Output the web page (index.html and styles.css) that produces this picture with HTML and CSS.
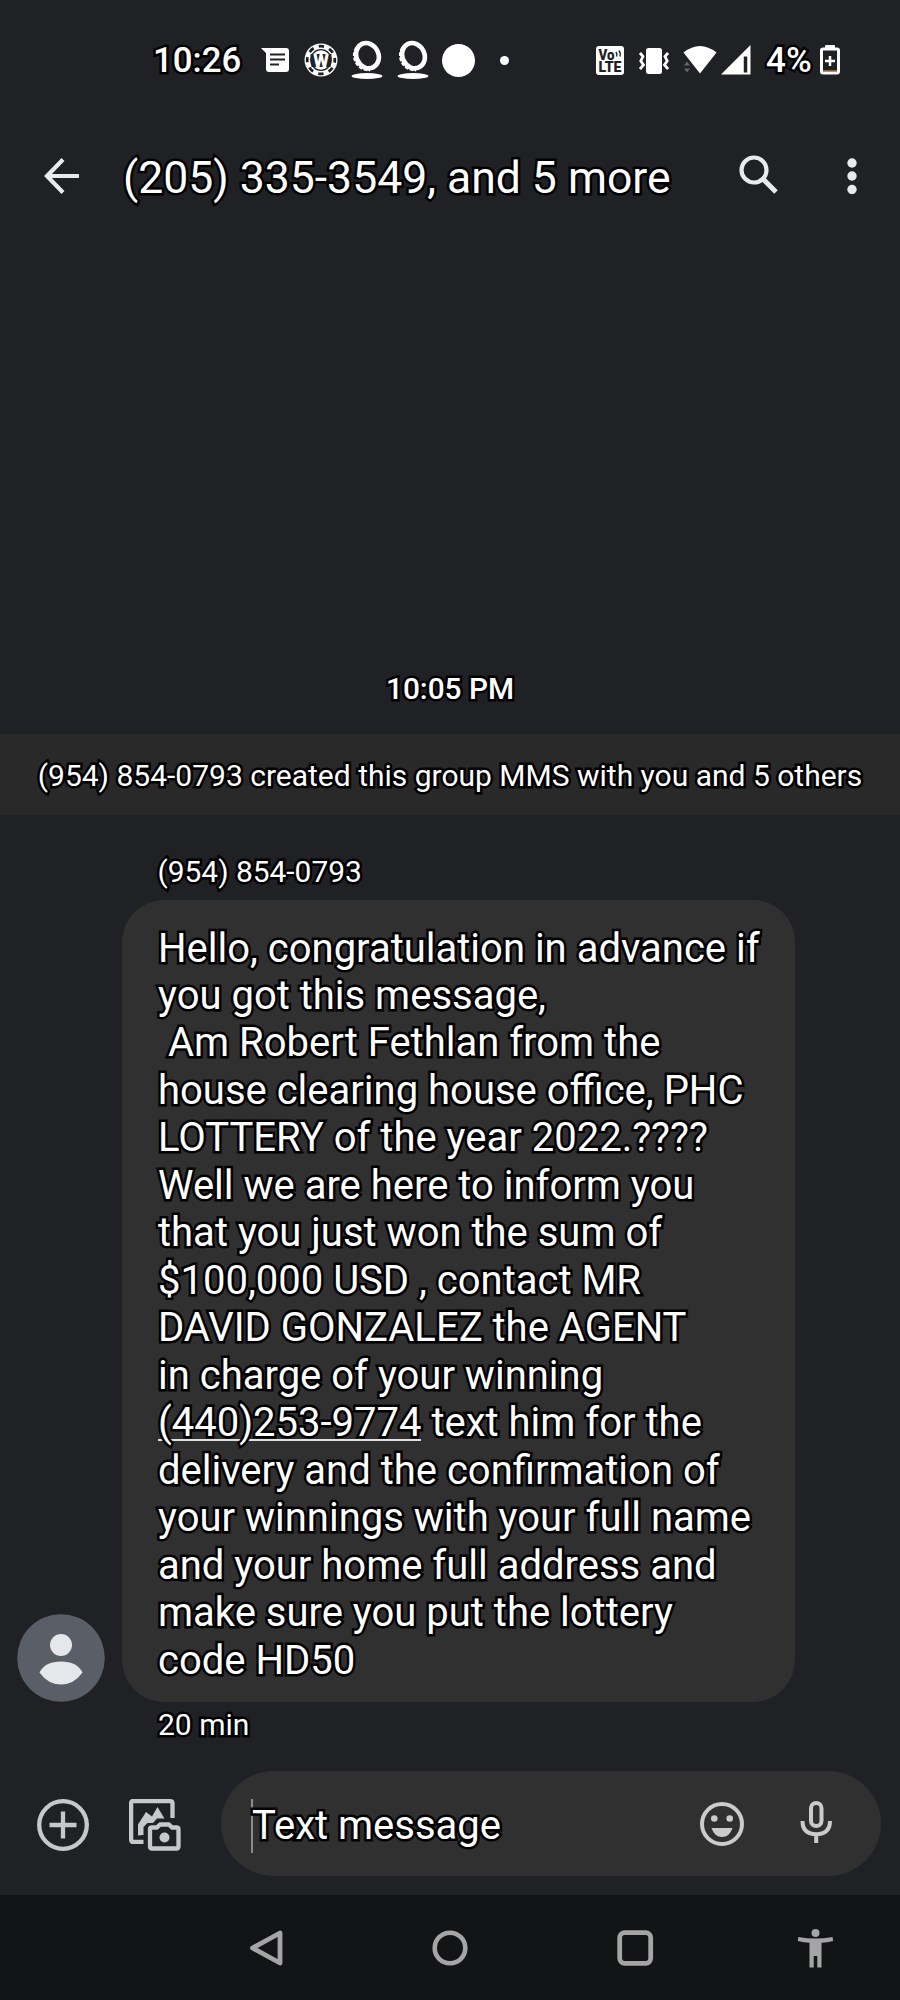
FILE: index.html
```html
<!DOCTYPE html>
<html lang="en">
<head>
    <meta charset="UTF-8">
    <meta name="viewport" content="width=device-width, initial-scale=1.0">
    <title>Messages</title>
    <link rel="stylesheet" href="styles.css">
</head>
<body>
<div class="phone">

    <div class="status-bar">
        <span class="clock">10:26</span>
        <svg class="st-msg" width="28" height="24" viewBox="0 0 28 24"><path fill="#fff" d="M0 0h25q3 0 3 3v18q0 3-3 3H8q-3 0-3-3V5z"/><path stroke="#202124" stroke-width="2" d="M9 6.500h15M9 11.500h15M9 16.500h9"/></svg>
        <svg class="st-chip" width="34" height="34" viewBox="0 0 34 34">
            <circle cx="17" cy="17" r="16.500" fill="#fff"/>
            <circle cx="17" cy="17" r="13.800" fill="none" stroke="#202124" stroke-width="2.800" stroke-dasharray="5.420 5.420" stroke-dashoffset="2.710"/>
            <circle cx="17" cy="17" r="10.300" fill="none" stroke="#202124" stroke-width="1.200"/>
            <path fill="#202124" d="M6.500 11h21l-1 13h-19z"/>
            <text x="17" y="23.500" text-anchor="middle" class="chip-text">W</text>
        </svg>
        <svg class="st-tire" width="34" height="40" viewBox="0 0 34 40"><g transform="rotate(-25 17 17)"><ellipse cx="18" cy="16" rx="11" ry="13" fill="none" stroke="#fff" stroke-width="4.600"/><path fill="none" stroke="#fff" stroke-width="4" stroke-dasharray="3.500 1.500" d="M12 4.500C7 8 5.500 12 5.500 16.500s2 9.500 9 13"/></g><ellipse cx="17" cy="36" rx="15.500" ry="3" fill="#fff"/></svg>
        <svg class="st-tire" width="34" height="40" viewBox="0 0 34 40"><g transform="rotate(-25 17 17)"><ellipse cx="18" cy="16" rx="11" ry="13" fill="none" stroke="#fff" stroke-width="4.600"/><path fill="none" stroke="#fff" stroke-width="4" stroke-dasharray="3.500 1.500" d="M12 4.500C7 8 5.500 12 5.500 16.500s2 9.500 9 13"/></g><ellipse cx="17" cy="36" rx="15.500" ry="3" fill="#fff"/></svg>
        <span class="st-circle"></span>
        <span class="st-dot"></span>
        <svg class="st-volte" width="28" height="29" viewBox="0 0 28 29"><rect width="28" height="29" rx="3" fill="#fff"/><text x="2.500" y="13.500" class="volte-text" textLength="16" lengthAdjust="spacingAndGlyphs">Vo</text><text x="2.500" y="26" class="volte-text" textLength="23" lengthAdjust="spacingAndGlyphs">LTE</text><path fill="none" stroke="#202124" stroke-width="1.500" d="M20 6q1.500 2.500 .5 4.500M23 4.500q2 3 1 6"/></svg>
        <svg class="st-vibrate" width="30" height="28" viewBox="0 0 30 28"><rect x="7" y="1" width="16" height="26" rx="2.500" fill="#fff"/><path fill="none" stroke="#fff" stroke-width="2.800" d="M1 6l3 3.500L1.800 14l2.700 4L1 22M29 6l-3 3.500 2.200 4.500-2.700 4L29 22"/></svg>
        <svg class="st-wifi" width="34" height="30" viewBox="0 0 34 30"><path fill="#fff" d="M.5 7.500Q17-5.500 33.500 7.500L17 28.500z"/><path fill="#666" d="M4 16.500l3 4H1zM1 23.500h6l-3 4z"/></svg>
        <svg class="st-signal" width="30" height="30" viewBox="0 0 30 30"><path fill="#fff" d="M29.500 0v29.500H0z"/><path stroke="#202124" stroke-width="3.500" d="M24.500 11.500v16"/></svg>
        <span class="percent">4%</span>
        <svg class="st-battery" width="20" height="30" viewBox="0 0 20 30"><rect x="5" width="10" height="5" rx="1" fill="#fff"/><rect x="1.500" y="4" width="17" height="24" rx="1.500" fill="#202124" stroke="#fff" stroke-width="3"/><path stroke="#c69a45" stroke-width="1.200" d="M3 26h14"/><path stroke="#fff" stroke-width="2.500" d="M10 11v10M5 16h10"/></svg>
    </div>

    <div class="header">
        <svg class="back" width="36" height="36" viewBox="0 0 36 36"><path fill="none" stroke="#e8eaed" stroke-width="4.200" d="M19 1.500L3 18l16 16.500M3 18h32"/></svg>
        <h1 class="title">(205) 335-3549, and 5 more</h1>
        <svg class="search" width="40" height="40" viewBox="0 0 40 40"><circle cx="15" cy="15" r="12.500" fill="none" stroke="#e8eaed" stroke-width="4.200"/><path stroke="#e8eaed" stroke-width="5" d="M24.500 24.500l12.500 12.500"/></svg>
        <svg class="more" width="10" height="36" viewBox="0 0 10 36"><g fill="#e8eaed"><circle cx="5" cy="5" r="4.700"/><circle cx="5" cy="18" r="4.700"/><circle cx="5" cy="31.500" r="4.700"/></g></svg>
    </div>

    <div class="conversation">
        <div class="day-time">10:05 PM</div>
        <div class="notice">(954) 854-0793 created this group MMS with you and 5 others</div>
        <div class="sender">(954) 854-0793</div>
        <div class="message-row">
            <svg class="avatar" width="88" height="88" viewBox="0 0 88 88"><circle cx="44" cy="44" r="43.800" fill="#595e67"/><circle cx="44" cy="31" r="11" fill="#e6e7ea"/><path fill="#e6e7ea" d="M22.500 58.500Q28 47.500 44 47.500t21.500 11Q57 70.500 44 70.500t-21.500-12z"/></svg>
            <div class="bubble">Hello, congratulation in advance if
you got this message,
 Am Robert Fethlan from the
house clearing house office, PHC
LOTTERY of the year 2022.????
Well we are here to inform you
that you just won the sum of
$100,000 USD , contact MR
DAVID GONZALEZ the AGENT
in charge of your winning
<span class="phone-link">(440)253-9774</span> text him for the
delivery and the confirmation of
your winnings with your full name
and your home full address and
make sure you put the lottery
code HD50</div>
        </div>
        <div class="age">20 min</div>
    </div>

    <div class="composer">
        <svg class="plus" width="52" height="52" viewBox="0 0 52 52"><g fill="none" stroke="#c7c8ca" stroke-width="4.300"><circle cx="26" cy="26" r="23.800"/><path d="M26 12.500v27M12.500 26h27"/></g></svg>
        <svg class="gallery" width="52" height="52" viewBox="0 0 52 52">
            <g fill="none" stroke="#c7c8ca" stroke-width="4.300" stroke-linejoin="round">
                <path d="M43.500 19V4.500q0-2.400-2.400-2.400H4.500q-2.400 0-2.400 2.400v36q0 2.400 2.400 2.400H14.500"/>
                <path d="M21 30.500q0-2 2-2h5l3-3h9l3 3h4.500q2 0 2 2v17q0 2-2 2H23q-2 0-2-2z"/>
            </g>
            <path fill="#c7c8ca" d="M9 36.500V25.500l8-12.500 6 4.500L28.500 8l7 11.500H28l-4 4.500h-5.500l-4 4v8z"/>
            <circle cx="35.500" cy="38.500" r="5" fill="#c7c8ca"/>
        </svg>
        <div class="input-box">
            <span class="caret"></span>
            <span class="placeholder">Text message</span>
            <svg class="emoji" width="44" height="44" viewBox="0 0 44 44"><circle cx="22" cy="22" r="20" fill="none" stroke="#cbcbcb" stroke-width="4"/><g fill="#cbcbcb"><circle cx="14.300" cy="16.500" r="3.300"/><circle cx="29.700" cy="16.500" r="3.300"/><path d="M11.500 26h21Q29.500 35 22 35t-10.500-9z"/></g></svg>
            <svg class="mic" width="32" height="44" viewBox="0 0 32 44"><g fill="none" stroke="#cbcbcb" stroke-width="4"><rect x="11" y="3" width="10.500" height="23" rx="5.250"/><path d="M2.500 21q0 13.200 13.700 13.200T30 21M16.200 34v9"/></g></svg>
        </div>
    </div>

    <div class="nav-bar">
        <svg class="nav-back" width="40" height="40" viewBox="0 0 40 40"><path fill="none" stroke="#a5a5a5" stroke-width="4.800" stroke-linejoin="round" d="M35 5L7.500 20 35 35z"/></svg>
        <svg class="nav-home" width="40" height="40" viewBox="0 0 40 40"><circle cx="20" cy="20" r="15.300" fill="none" stroke="#a5a5a5" stroke-width="4.600"/></svg>
        <svg class="nav-recent" width="40" height="40" viewBox="0 0 40 40"><rect x="4.700" y="4.700" width="31" height="30.600" rx="5" fill="none" stroke="#a5a5a5" stroke-width="4.800"/></svg>
        <svg class="nav-access" width="40" height="40" viewBox="0 0 40 40"><g fill="#a5a5a5"><circle cx="20.500" cy="5" r="4"/><path d="M3.300 9Q20.500 12 37.500 9l.7 4Q32 14.500 26.500 14.700V39.500h-4.200V28h-3.600v11.500h-4.200V14.700Q9 14.500 2.800 13z"/></g></svg>
    </div>

</div>
</body>
</html>
```

FILE: styles.css
```css
body {
    margin: 0;
    background-color: #202124;
    font-family: Roboto, "Noto Sans", sans-serif;
    color: #fff;
}

svg {
    display: block;
    flex: none;
}

.phone {
    width: 900px;
    height: 2000px;
    display: flex;
    flex-direction: column;
    overflow: hidden;
}

/* black outline behind all the text */
.clock,
.percent,
.title,
.day-time,
.notice,
.sender,
.bubble,
.age,
.placeholder {
    -webkit-text-stroke: 5px #000;
    paint-order: stroke fill;
}

/* Status bar */
.status-bar {
    height: 120px;
    flex: none;
    padding-left: 153px;
    display: flex;
    align-items: center;
}

.clock {
    width: 108px;
    font-size: 34.8px;
    font-weight: 500;
}

.st-chip {
    margin-left: 15px;
}

.chip-text {
    font: 900 18px Roboto, sans-serif;
    fill: #fff;
}

.st-tire {
    margin-left: 12px;
}

.st-circle {
    width: 33px;
    height: 33px;
    margin-left: 12px;
    border-radius: 50%;
    background-color: #fff;
}

.st-dot {
    width: 9px;
    height: 9px;
    margin-left: 25px;
    border-radius: 50%;
    background-color: #fff;
}

.st-volte {
    margin-left: 87px;
}

.volte-text {
    font: 900 14px Roboto, sans-serif;
    fill: #202124;
}

.st-vibrate {
    margin: 2px 0 0 15px;
}

.st-wifi {
    margin-left: 14px;
}

.st-signal {
    margin-left: 4px;
}

.percent {
    width: 54px;
    margin-left: 15px;
    font-size: 35px;
    font-weight: 500;
}

/* Header */
.header {
    height: 116px;
    flex: none;
    display: flex;
    align-items: center;
}

.back {
    margin: 0 0 4px 44px;
}

.title {
    width: 616px;
    margin: 0 0 0 43px;
    font-size: 44.5px;
    font-weight: 400;
}

.search {
    margin-bottom: 6px;
}

.more {
    margin: 0 0 5px 68px;
}

/* Conversation */
.conversation {
    flex: 1;
    padding-top: 433px;
}

.day-time {
    font-size: 29.8px;
    font-weight: 500;
    line-height: 40px;
    text-align: center;
}

.notice {
    height: 77px;
    margin-top: 25px;
    padding-top: 4px;
    background-color: #29292a;
    font-size: 30px;
    line-height: 76px;
    text-align: center;
}

.sender {
    margin: 37px 0 8px 157.5px;
    font-size: 29.9px;
    line-height: 40px;
}

.message-row {
    display: flex;
    align-items: flex-end;
}

.avatar {
    margin-left: 17px;
}

.bubble {
    width: 637px;
    height: 760px;
    margin-left: 17px;
    padding: 24.5px 0 17.5px 36px;
    border-radius: 42px;
    background-color: #303030;
    font-size: 40px;
    line-height: 47.47px;
    white-space: pre;
}

.phone-link {
    background: linear-gradient(#e0e0e0, #e0e0e0) 0 40px / 100% 2px no-repeat;
}

.age {
    margin: 3px 0 0 158px;
    font-size: 30px;
    line-height: 40px;
}

/* Composer */
.composer {
    height: 124px;
    flex: none;
    padding-left: 37px;
    display: flex;
    align-items: flex-start;
}

.plus,
.gallery {
    margin-top: 28px;
}

.gallery {
    margin-left: 40px;
}

.input-box {
    width: 630px;
    height: 105px;
    margin-left: 40px;
    padding-left: 30px;
    border-radius: 53px;
    background-color: #303030;
    display: flex;
    align-items: center;
}

.caret {
    width: 2px;
    height: 54px;
    margin-top: 4px;
    background-color: #8c8c8c;
}

.placeholder {
    width: 448px;
    margin: 4px 0 0 -1px;
    font-size: 40px;
}

.mic {
    margin: 0 0 4px 56px;
}

/* Navigation bar */
.nav-bar {
    height: 105px;
    flex: none;
    padding-left: 245px;
    background-color: #131416;
    display: flex;
    align-items: center;
}

.nav-home {
    margin-left: 145px;
}

.nav-recent {
    margin-left: 145px;
}

.nav-access {
    margin-left: 140px;
}
```
